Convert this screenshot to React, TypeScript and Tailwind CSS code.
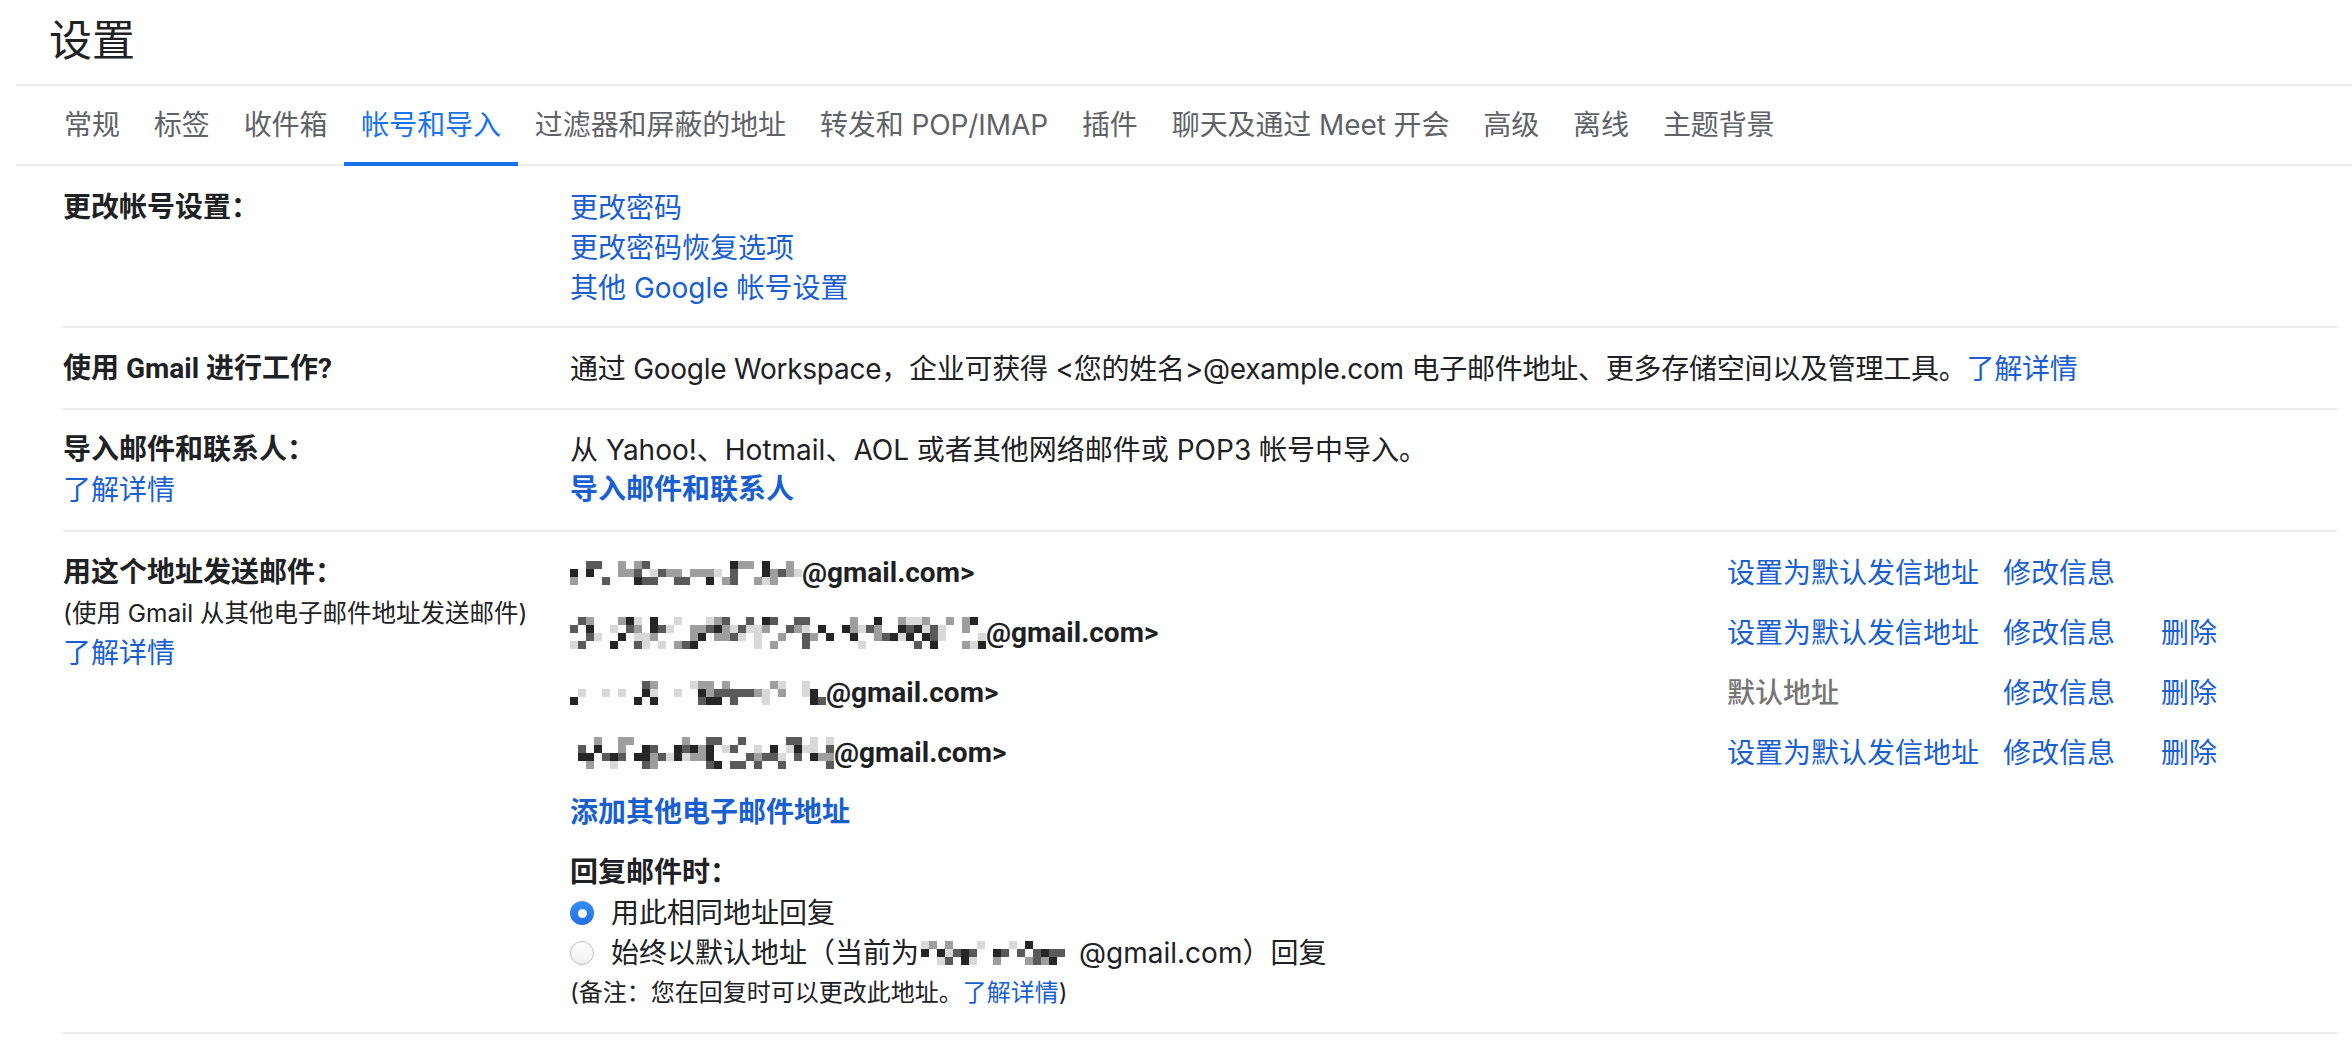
import React from 'react';

const LINK = 'text-[#1a5fd0] cursor-pointer';
const BOLD = "font-bold font-['Roboto','Noto_Sans_CJK_SC',sans-serif]";
const SHADES = ['', '#d9d9d9', '#9e9e9e', '#5a5a5a', '#262626'];

// small seeded generator so the blurred parts look the same on every render
function makeRng(seed: number) {
  let a = seed;
  return () => {
    a |= 0;
    a = (a + 0x6d2b79f5) | 0;
    let t = Math.imul(a ^ (a >>> 15), 1 | a);
    t = (t + Math.imul(t ^ (t >>> 7), 61 | t)) ^ t;
    return ((t ^ (t >>> 14)) >>> 0) / 4294967296;
  };
}

function Mosaic({ seed, cols, rows, cell = 8 }: { seed: number; cols: number; rows: number; cell?: number }) {
  const rnd = makeRng(seed);
  const grid: number[][] = [];
  for (let r = 0; r < rows; r++) {
    const row: number[] = [];
    for (let c = 0; c < cols; c++) {
      const edge = r === 0 || r === rows - 1;
      const v = rnd();
      if (v < (edge ? 0.6 : 0.4)) row.push(0);
      else row.push(1 + Math.floor(rnd() * 4));
    }
    grid.push(row);
  }
  return (
    <span className="inline-flex flex-col shrink-0">
      {grid.map((row, r) => (
        <span key={r} className="flex">
          {row.map((s, c) => (
            <span key={c} style={{ width: cell, height: cell, background: SHADES[s] || 'transparent' }} />
          ))}
        </span>
      ))}
    </span>
  );
}

const tabs = ['常规', '标签', '收件箱', '帐号和导入', '过滤器和屏蔽的地址', '转发和 POP/IMAP', '插件', '聊天及通过 Meet 开会', '高级', '离线', '主题背景'];

const emails = [
  { seed: 11, cols: 29, rows: 3, pad: 0, actions: ['set', 'edit'] },
  { seed: 27, cols: 52, rows: 4, pad: 0, actions: ['set', 'edit', 'del'] },
  { seed: 11, cols: 32, rows: 3, pad: 0, actions: ['default', 'edit', 'del'] },
  { seed: 53, cols: 32, rows: 4, pad: 8, actions: ['set', 'edit', 'del'] },
];

function Row({ label, children, className = '' }: { label: React.ReactNode; children: React.ReactNode; className?: string }) {
  return (
    <div className={`flex border-b-2 border-[#ebebeb] ${className}`}>
      <div className="w-[507px] shrink-0 flex flex-col">{label}</div>
      <div className="flex-1 flex flex-col">{children}</div>
    </div>
  );
}

export default function App() {
  return (
    <div className="w-full h-[1046px] bg-white overflow-hidden text-[#202124] text-[28px] leading-[40px] font-['Inter','Noto_Sans_CJK_SC',sans-serif]">
      <div className="pl-4">
        {/* title */}
        <div className="h-[86px] border-b-2 border-[#ebebeb] pl-[33px] flex items-center">
          <h1 className="text-[43px] leading-none -mt-[4px]">设置</h1>
        </div>

        {/* tabs */}
        <div className="h-[80px] border-b-2 border-[#ebebeb] flex pl-[31px]">
          {tabs.map((t) => {
            const active = t === '帐号和导入';
            return (
              <div key={t} className={`relative px-[17px] tracking-[-0.1px] flex items-center whitespace-nowrap ${active ? 'text-[#1a73e8]' : 'text-[#5f6368]'}`}>
                {t}
                {active && <div className="absolute left-0 right-0 -bottom-[2px] h-[4px] bg-[#1a73e8]" />}
              </div>
            );
          })}
        </div>
      </div>

      <div className="ml-[63px] mr-[15px]">
        <Row className="pt-[22px] pb-[18px]" label={<span className={BOLD}>更改帐号设置：</span>}>
          <span className={LINK}>更改密码</span>
          <span className={LINK}>更改密码恢复选项</span>
          <span className={LINK}>其他 Google 帐号设置</span>
        </Row>

        <Row className="pt-[21px] pb-[19px]" label={<span className={BOLD}>使用 Gmail 进行工作?</span>}>
          <span className="whitespace-nowrap tracking-[-0.25px]">
            通过 Google Workspace，企业可获得 &lt;您的姓名&gt;@example.com 电子邮件地址、更多存储空间以及管理工具。
            <span className={LINK}>了解详情</span>
          </span>
        </Row>

        <Row
          className="pt-[20px] pb-[20px]"
          label={
            <>
              <span className={BOLD}>导入邮件和联系人：</span>
              <span className={LINK}>了解详情</span>
            </>
          }
        >
          <span>从 Yahoo!、Hotmail、AOL 或者其他网络邮件或 POP3 帐号中导入。</span>
          <span className={`${LINK} ${BOLD}`}>导入邮件和联系人</span>
        </Row>

        <Row
          className="pt-[21px] pb-[19px]"
          label={
            <>
              <span className={BOLD}>用这个地址发送邮件：</span>
              <span className="text-[24.5px] whitespace-nowrap">(使用 Gmail 从其他电子邮件地址发送邮件)</span>
              <span className={LINK}>了解详情</span>
            </>
          }
        >
          <div className="grid grid-cols-[1157px_276px_158px_auto] gap-y-[20px]">
            {emails.map((e, i) => (
              <React.Fragment key={i}>
                <div className={`h-[40px] flex items-center ${BOLD}`} style={{ paddingLeft: e.pad }}>
                  <Mosaic seed={e.seed + i} cols={e.cols} rows={e.rows} />
                  <span>@gmail.com&gt;</span>
                </div>
                <div className="h-[40px] flex items-center">
                  {e.actions.includes('set') && <span className={LINK}>设置为默认发信地址</span>}
                  {e.actions.includes('default') && <span className="text-[#767676] font-medium">默认地址</span>}
                </div>
                <div className="h-[40px] flex items-center">
                  <span className={LINK}>修改信息</span>
                </div>
                <div className="h-[40px] flex items-center">
                  {e.actions.includes('del') && <span className={LINK}>删除</span>}
                </div>
              </React.Fragment>
            ))}
          </div>

          <span className={`${LINK} ${BOLD} mt-[20px]`}>添加其他电子邮件地址</span>

          <span className={`${BOLD} mt-[20px]`}>回复邮件时：</span>
          <label className="flex items-center h-[40px]">
            <span className="w-[24px] h-[24px] rounded-full bg-gradient-to-b from-[#3b8ef5] to-[#1f6fe6] flex items-center justify-center shrink-0">
              <span className="w-[9px] h-[9px] rounded-full bg-white" />
            </span>
            <span className="ml-[17px]">用此相同地址回复</span>
          </label>
          <label className="flex items-center h-[40px]">
            <span className="w-[24px] h-[24px] rounded-full border border-[#bfbfbf] bg-gradient-to-b from-white to-[#f0f0f0] shrink-0" />
            <span className="ml-[17px] flex items-center whitespace-nowrap">
              始终以默认地址（当前为
              <span className="ml-[2px] mr-[14px] flex items-center">
                <Mosaic seed={91} cols={18} rows={3} />
              </span>
              @gmail.com）回复
            </span>
          </label>
          <span className="text-[24px] whitespace-nowrap">
            (备注：您在回复时可以更改此地址。<span className={LINK}>了解详情</span>)
          </span>
        </Row>
      </div>
    </div>
  );
}
